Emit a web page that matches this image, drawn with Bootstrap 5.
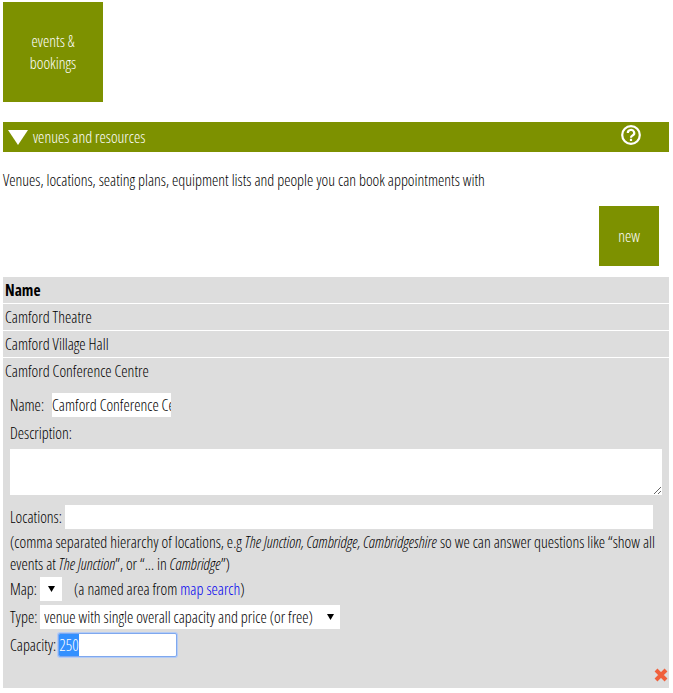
<!DOCTYPE html>
<html lang="en">
<head>
    <meta charset="UTF-8">
    <meta name="viewport" content="width=device-width, initial-scale=1.0">
    <title>Venues and resources</title>
    <link href="https://cdn.jsdelivr.net/npm/bootstrap@5.3.0/dist/css/bootstrap.min.css" rel="stylesheet">
    <style>
        body {
            font-family: "Open Sans", "Liberation Sans", sans-serif;
            font-stretch: condensed;
            font-weight: 300;
            font-size: 15.9px;
            line-height: 22px;
            color: #000;
            background: #fff;
            padding: 2px 4px 0 3px;
        }
        .tile {
            background: #7d9100;
            color: #fff;
            text-align: center;
        }
        .tile-big {
            width: 100px;
            height: 100px;
        }
        .tile-new {
            width: 60px;
            height: 60px;
            margin-right: 10px;
        }
        .section-bar {
            background: #7d9100;
            color: #fff;
            height: 30px;
            margin-top: 20px;
            padding: 0 28px 0 5px;
        }
        .bar-arrow {
            margin-right: 5px;
        }
        .bar-help {
            margin-bottom: 4px;
        }
        .section-text {
            margin: 17px 0 15px;
        }
        .new-row {
            margin-bottom: 11px;
        }
        .venue-head {
            background: #ddd;
            border-bottom: 1px solid #fff;
            height: 27px;
            padding: 2px 2px 0;
        }
        .venue-head.head-name {
            font-weight: 700;
            font-size: 15.5px;
        }
        .venue-open {
            background: #ddd;
            height: 330px;
            padding: 2px 2px 0;
            position: relative;
        }
        .venue-form {
            padding: 11px 5px 0 5px;
        }
        .form-line {
            margin-top: 4px;
        }
        .plain-field {
            border: 0;
            background: #fff;
            height: 24px;
            padding: 0;
            font: inherit;
            color: #000;
            outline: none;
        }
        .name-field {
            width: 119px;
            margin-left: 8px;
        }
        .desc-line {
            margin-top: 5px;
        }
        .desc-field {
            display: block;
            width: 652px;
            height: 46px;
            margin: 5px 0 10px;
        }
        .loc-field {
            width: 588px;
            margin-left: 3px;
        }
        .hint-text {
            margin-top: 2px;
        }
        .map-line {
            margin-top: 2px;
        }
        .plain-select {
            border: 0;
            height: 24px;
            font: inherit;
            color: #000;
            padding: 0 0 0 4px;
            border-radius: 0;
            appearance: none;
            background: #fff url("data:image/svg+xml,%3Csvg xmlns='http://www.w3.org/2000/svg' width='7' height='6'%3E%3Cpath d='M0 0H7L3.5 6Z' fill='%23000'/%3E%3C/svg%3E") no-repeat;
        }
        .map-select {
            width: 22px;
            margin: 0 12px 0 3px;
            background-position: 8px 9px;
        }
        .type-select {
            width: 300px;
            margin-left: 3px;
            background-position: 287px 9px;
        }
        .cap-field {
            width: 119px;
            border: 1px solid #7fa8ee;
            box-shadow: 0 0 0 1px #b4ccf6;
            border-radius: 2px;
            margin-left: 2px;
        }
        .cap-field::selection {
            background: #3390ff;
            color: #fff;
        }
        .venue-form a {
            color: #00e;
            text-decoration: none;
        }
        .close-mark {
            position: absolute;
            right: 1px;
            bottom: 6px;
        }
    </style>
</head>
<body>
    <div class="tile tile-big d-flex align-items-center justify-content-center">events &amp;<br>bookings</div>

    <div class="section-bar d-flex align-items-center">
        <svg class="bar-arrow" width="20" height="15" viewBox="0 0 20 15"><path d="M0 0H20L10 15Z" fill="#fff"/></svg>
        <span>venues and resources</span>
        <svg class="bar-help ms-auto" width="20" height="20" viewBox="0 0 20 20">
            <circle cx="10" cy="10" r="8.8" fill="none" stroke="#fff" stroke-width="2.2"/>
            <path d="M6.8 8a3.2 3 0 1 1 4.8 2.5c-1 .7-1.6 1-1.6 2.2" fill="none" stroke="#fff" stroke-width="2.2"/>
            <rect x="8.9" y="13.8" width="2.2" height="2.2" fill="#fff"/>
        </svg>
    </div>

    <p class="section-text">Venues, locations, seating plans, equipment lists and people you can book appointments with</p>

    <div class="new-row d-flex justify-content-end">
        <div class="tile tile-new d-flex align-items-center justify-content-center">new</div>
    </div>

    <div class="venue-list">
        <div class="venue-head head-name">Name</div>
        <div class="venue-head">Camford Theatre</div>
        <div class="venue-head">Camford Village Hall</div>
        <div class="venue-open">
            Camford Conference Centre
            <div class="venue-form">
                <div class="d-flex align-items-center">Name:<input class="plain-field name-field" type="text" value="Camford Conference Centre"></div>
                <div class="desc-line">Description:</div>
                <textarea class="plain-field desc-field"></textarea>
                <div class="d-flex align-items-center">Locations:<input class="plain-field loc-field" type="text"></div>
                <div class="hint-text">(comma separated hierarchy of locations, e.g <em>The Junction, Cambridge, Cambridgeshire</em> so we can answer questions like “show all events at <em>The Junction</em>”, or “... in <em>Cambridge</em>”)</div>
                <div class="map-line d-flex align-items-center">Map:<select class="plain-select map-select"><option></option></select>(a named area from&nbsp;<a href="#">map search</a>)</div>
                <div class="form-line d-flex align-items-center">Type:<select class="plain-select type-select"><option>venue with single overall capacity and price (or free)</option></select></div>
                <div class="form-line d-flex align-items-center">Capacity:<input id="capacity" class="plain-field cap-field" type="text" value="250"></div>
            </div>
            <svg class="close-mark" width="14" height="14" viewBox="0 0 14 14"><path d="M2 2L12 12M12 2L2 12" stroke="#f0603c" stroke-width="4"/></svg>
        </div>
    </div>

    <script src="https://cdn.jsdelivr.net/npm/bootstrap@5.3.0/dist/js/bootstrap.bundle.min.js"></script>
    <script>
        // Capacity field is focused with its value selected
        const capacity = document.getElementById('capacity');
        capacity.focus();
        capacity.select();
    </script>
</body>
</html>
